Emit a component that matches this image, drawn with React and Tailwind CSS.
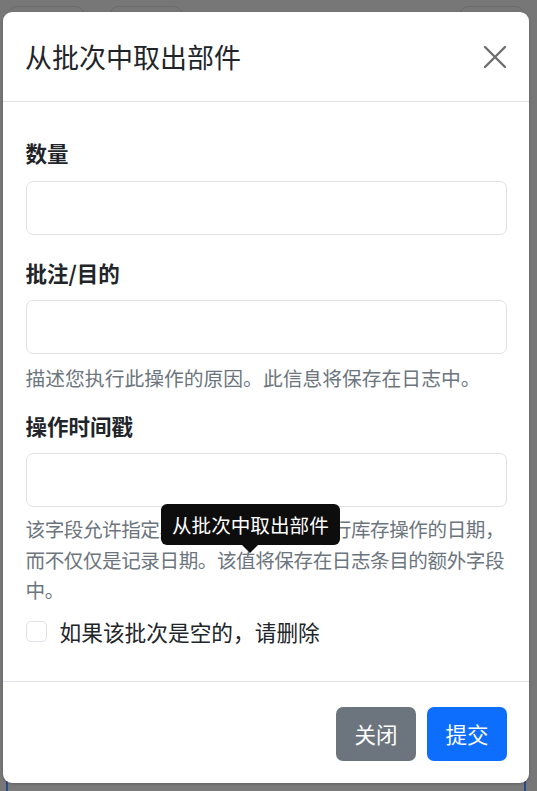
import React from "react";

const font = { fontFamily: '"Noto Sans CJK SC", "Noto Sans", sans-serif' };

function Label({ children }) {
  return (
    <div className="text-[21.5px] font-bold leading-[33.6px] text-[#212529] mb-[11px]">
      {children}
    </div>
  );
}

function Input() {
  return (
    <div className="h-[54px] w-full rounded-[7px] border border-[#dee2e6] bg-white" />
  );
}

export default function App() {
  return (
    <div
      className="relative w-[537px] h-[791px] overflow-hidden bg-[#777777]"
      style={font}
    >
      {/* faint page content behind the backdrop */}
      <div className="absolute left-[8px] top-[6px] w-[76px] h-[30px] rounded-[8px] border border-[#6c6c6c]" />
      <div className="absolute left-[110px] top-[6px] w-[72px] h-[30px] rounded-[8px] border border-[#6c6c6c]" />
      <div className="absolute left-[460px] top-[6px] w-[64px] h-[30px] rounded-[8px] border border-[#6c6c6c]" />
      <div className="absolute left-[6px] top-[780px] w-[520px] h-[30px] border-x-2 border-[#2a4c86] bg-[#7a7a7a]" />

      <div className="relative ml-[3px] mt-[12px] w-[526px] rounded-[9px] bg-white shadow-[0_1px_3px_rgba(0,0,0,0.2)]">
        {/* header */}
        <div className="flex items-center justify-between h-[90px] px-[22px] border-b border-[#dee2e6]">
          <div className="text-[27px] leading-[42px] text-[#212529]">
            从批次中取出部件
          </div>
          <svg width="24" height="24" viewBox="0 0 24 24">
            <path
              d="M2 2 L22 22 M22 2 L2 22"
              stroke="#6e6e6e"
              strokeWidth="2.4"
              strokeLinecap="round"
              fill="none"
            />
          </svg>
        </div>

        {/* body */}
        <div className="relative px-[22.5px] pt-[34px] pb-[33px]">
          <Label>数量</Label>
          <Input />

          <div className="mt-[21px]">
            <Label>批注/目的</Label>
            <Input />
            <div className="mt-[9px] text-[19.8px] leading-[29.4px] text-[#6c757d]">
              描述您执行此操作的原因。此信息将保存在日志中。
            </div>
          </div>

          <div className="mt-[16px]">
            <Label>操作时间戳</Label>
            <Input />
            <div className="mt-[7px] text-[19.6px] leading-[30.5px] tracking-[-0.45px] text-[#6c757d] whitespace-nowrap">
              该字段允许指定具体日期作为实际执行库存操作的日期，
              <br />
              而不仅仅是记录日期。该值将保存在日志条目的额外字段
              <br />
              中。
            </div>
          </div>

          <div className="mt-[9px] flex items-center">
            <div className="w-[21px] h-[21px] rounded-[5px] border border-[#dee2e6] bg-white" />
            <div className="ml-[13px] text-[21.7px] leading-[33px] text-[#212529]">
              如果该批次是空的，请删除
            </div>
          </div>

          {/* tooltip */}
          <div className="absolute left-[158px] top-[402px] flex flex-col items-center">
            <div className="h-[41px] px-[11px] flex items-center rounded-[6px] bg-[#0d0d0d] text-white text-[19.6px] leading-[29px] whitespace-nowrap">
              从批次中取出部件
            </div>
            <div className="w-0 h-0 border-x-[8px] border-x-transparent border-t-[8px] border-t-[#0d0d0d]" />
          </div>
        </div>

        {/* footer */}
        <div className="flex justify-end items-center gap-[11px] border-t border-[#dee2e6] pt-[25px] pb-[22px] pr-[22px]">
          <div className="w-[80px] h-[54px] rounded-[7px] bg-[#6c757d] text-white text-[21.5px] flex items-center justify-center">
            关闭
          </div>
          <div className="w-[80px] h-[54px] rounded-[7px] bg-[#0d6efd] text-white text-[21.5px] flex items-center justify-center">
            提交
          </div>
        </div>
      </div>
    </div>
  );
}
